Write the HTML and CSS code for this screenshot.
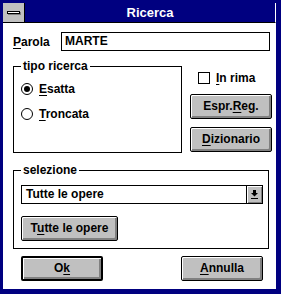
FILE: index.html
```html
<!DOCTYPE html>
<html lang="it">
<head>
    <meta charset="UTF-8">
    <title>Ricerca</title>
    <link rel="stylesheet" href="styles.css">
</head>
<body>
    <div class="window">
        <div class="titlebar">
            <div class="sysmenu"><span class="sysbar"></span></div>
            <div class="title">Ricerca</div>
        </div>
        <div class="client">
            <div class="row-word">
                <label class="label-word"><u>P</u>arola</label>
                <div class="textbox">MARTE</div>
            </div>

            <div class="row-type">
                <fieldset class="group group-type">
                    <legend>tipo ricerca</legend>
                    <div class="radio-list">
                        <div class="option"><span class="radio checked"></span><span><u>E</u>satta</span></div>
                        <div class="option"><span class="radio"></span><span><u>T</u>roncata</span></div>
                    </div>
                </fieldset>
                <div class="side">
                    <div class="option check-row"><span class="checkbox"></span><span><u>I</u>n rima</span></div>
                    <button class="btn btn-side">Espr.<u>R</u>eg.</button>
                    <button class="btn btn-side btn-dict"><u>D</u>izionario</button>
                </div>
            </div>

            <fieldset class="group group-sel">
                <legend>selezione</legend>
                <div class="combo">
                    <div class="combo-text">Tutte le opere</div>
                    <div class="combo-arrow">
                        <svg width="7" height="9" viewBox="0 0 7 9">
                            <rect x="2" y="0" width="3" height="3" fill="#000"/>
                            <polygon points="0,3 7,3 3.5,6.5" fill="#000"/>
                            <rect x="0" y="8" width="7" height="1" fill="#000"/>
                        </svg>
                    </div>
                </div>
                <button class="btn btn-all">T<u>u</u>tte le opere</button>
            </fieldset>

            <div class="row-actions">
                <button class="btn btn-action btn-default">O<u>k</u></button>
                <button class="btn btn-action"><u>A</u>nnulla</button>
            </div>
        </div>
    </div>
</body>
</html>
```

FILE: styles.css
```css
body {
    margin: 0;
    background-color: #000080;
    font-family: "Liberation Sans", Arial, sans-serif;
    font-weight: bold;
    font-size: 12px;
    color: #000;
}

.window {
    width: 281px;
    height: 294px;
    box-sizing: border-box;
    padding: 3px 5px 5px 3px;
    background-color: #000080;
    display: flex;
    flex-direction: column;
}

.titlebar {
    height: 20px;
    box-sizing: border-box;
    display: flex;
    border-bottom: 1px solid #000;
    border-right: 1px solid #fff;
}

.sysmenu {
    width: 22px;
    box-sizing: border-box;
    background-color: #c0c0c0;
    border-right: 1px solid #000;
    display: flex;
    align-items: center;
    justify-content: center;
}

.sysbar {
    width: 13px;
    height: 3px;
    box-sizing: border-box;
    background-color: #fff;
    border: 1px solid #000;
    box-shadow: 1px 1px 0 #808080;
}

.title {
    flex: 1;
    color: #fff;
    font-size: 13px;
    line-height: 19px;
    text-align: center;
}

.client {
    flex: 1;
    background-color: #fff;
    padding: 9px 0 0 10px;
}

u {
    text-decoration-thickness: 1px;
    text-underline-offset: 2px;
}

.row-word {
    display: flex;
    align-items: center;
    height: 19px;
}

.label-word {
    width: 48px;
}

.textbox {
    width: 209px;
    height: 19px;
    box-sizing: border-box;
    border: 1px solid #000;
    padding-left: 3px;
    line-height: 17px;
}

.row-type {
    display: flex;
    gap: 8px;
    margin-top: 8px;
}

.group {
    margin: 0;
    padding: 0 0 0 7px;
    min-width: 0;
    box-sizing: border-box;
    border: 1px solid #000;
}

.group legend {
    padding: 0 2px;
    line-height: 14px;
}

.group-type {
    width: 169px;
    height: 94px;
}

.radio-list {
    display: flex;
    flex-direction: column;
    gap: 7px;
    margin-top: 7px;
}

.option {
    display: flex;
    align-items: center;
    gap: 6px;
    height: 18px;
}

.radio {
    width: 12px;
    height: 12px;
    box-sizing: border-box;
    border: 1px solid #000;
    border-radius: 50%;
    display: flex;
    align-items: center;
    justify-content: center;
}

.radio.checked::after {
    content: "";
    width: 6px;
    height: 6px;
    border-radius: 50%;
    background-color: #000;
}

.side {
    width: 82px;
    display: flex;
    flex-direction: column;
    padding-top: 12px;
}

.check-row {
    margin-left: 8px;
    height: 14px;
}

.checkbox {
    width: 12px;
    height: 12px;
    box-sizing: border-box;
    border: 1px solid #000;
}

.btn {
    font-family: "Liberation Sans", Arial, sans-serif;
    font-weight: bold;
    font-size: 12px;
    color: #000;
    background-color: #c0c0c0;
    border: 1px solid #000;
    border-radius: 2px;
    box-shadow: inset 1px 1px 0 #fff, inset -1px -1px 0 #808080, inset -2px -2px 0 #808080;
    padding: 0 0 2px;
    height: 25px;
    box-sizing: border-box;
}

.btn-side {
    margin-top: 9px;
}

.btn-dict {
    margin-top: 8px;
}

.group-sel {
    width: 256px;
    height: 86px;
    margin-top: 10px;
}

.combo {
    width: 242px;
    height: 19px;
    box-sizing: border-box;
    margin-top: 8px;
    border: 1px solid #000;
    display: flex;
}

.combo-text {
    flex: 1;
    padding-left: 4px;
    line-height: 17px;
}

.combo-arrow {
    width: 16px;
    box-sizing: border-box;
    border-left: 1px solid #000;
    background-color: #c0c0c0;
    box-shadow: inset 1px 1px 0 #fff, inset -1px -1px 0 #808080;
    display: flex;
    align-items: center;
    justify-content: center;
}

.btn-all {
    display: block;
    width: 97px;
    margin-top: 12px;
}

.row-actions {
    width: 242px;
    margin: 7px 0 0 8px;
    display: flex;
    justify-content: space-between;
}

.btn-action {
    width: 82px;
}

.btn-default {
    border-width: 2px;
}
```
